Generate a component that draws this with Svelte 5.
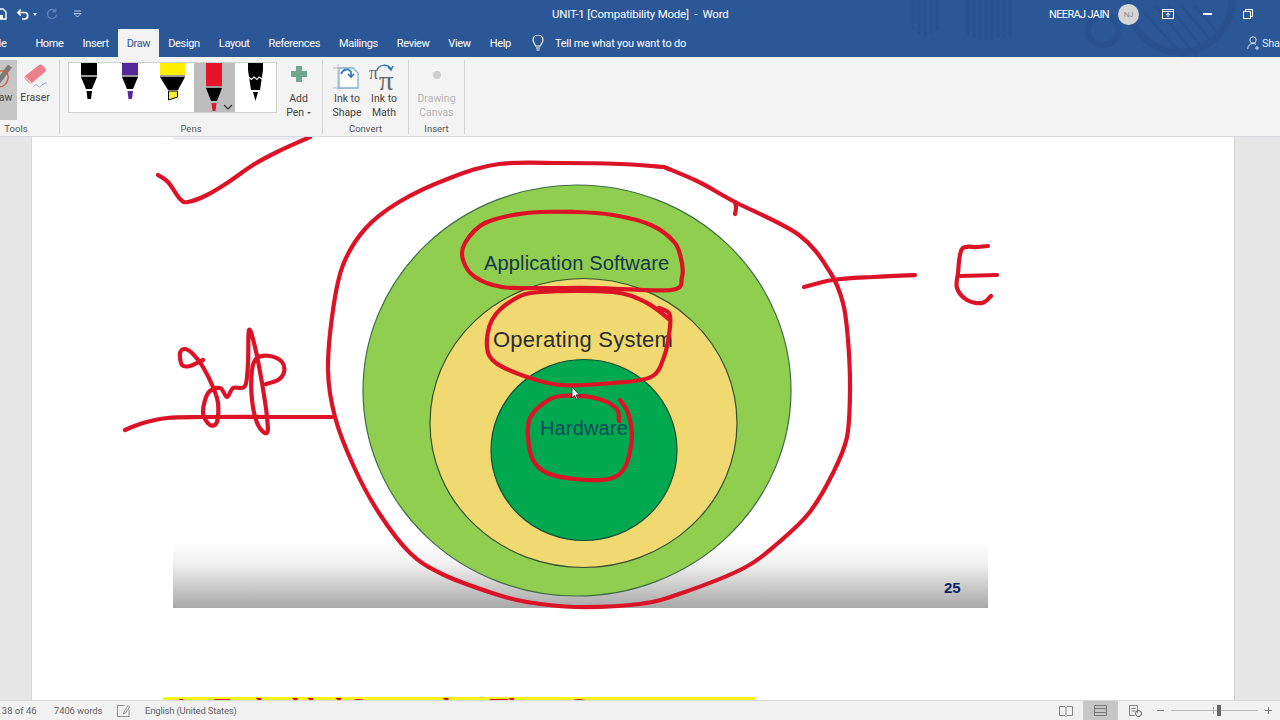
<script>
	const tabs = ['File', 'Home', 'Insert', 'Draw', 'Design', 'Layout', 'References', 'Mailings', 'Review', 'View', 'Help'];

	// page coordinates of the pen strokes on the slide
	const strokes = [
		[[158,175],[168,182],[180,199],[188,202],[207,195],[227,183],[253,165],[277,152],[310,137]],
		[[125,430],[143,423],[167,418],[203,417],[270,417],[332,417]],
		[[203,360],[190,366],[182,365],[180,353],[185,349],[193,354],[203,367],[213,387],[218,403],[217,422],[210,425],[203,413],[208,393],[220,388],[227,397],[233,388],[245,386],[248,363],[249,330],[255,347],[262,383],[267,417],[267,433],[258,425],[252,400],[252,370],[257,358],[270,356],[282,362],[284,372],[278,380],[266,384]],
		[[664,167],[620,164],[561,163],[499,164],[450,178],[399,202],[365,229],[343,265],[333,310],[328,370],[335,417],[354,467],[379,513],[410,553],[442,574],[492,593],[527,602],[575,607],[640,604],[682,593],[744,568],[778,543],[809,513],[833,473],[847,437],[850,390],[848,340],[843,303],[830,272],[799,235],[735,202],[699,182],[664,167]],
		[[735,202],[736,208],[735,214]],
		[[682,263],[675,243],[651,225],[613,215],[575,212],[527,213],[485,223],[465,243],[463,260],[475,277],[502,287],[544,288],[595,288],[671,290],[682,277],[682,263]],
		[[659,308],[669,313],[670,327],[664,357],[651,377],[613,383],[561,385],[527,377],[496,363],[487,347],[492,320],[513,300],[540,292],[613,292],[647,303],[670,320]],
		[[620,400],[628,413],[632,437],[625,467],[609,479],[575,479],[547,473],[533,460],[528,437],[530,418],[544,403],[561,396],[595,398],[616,408],[619,421]],
		[[804,287],[833,280],[873,277],[915,275]],
		[[988,246],[977,247],[962,249],[958,273],[957,288],[967,300],[982,303],[991,296]],
		[[960,276],[997,275]]
	];

	function smooth(pts) {
		let d = `M${pts[0][0]} ${pts[0][1]}`;
		for (let i = 0; i < pts.length - 1; i++) {
			const p0 = pts[i - 1] || pts[i];
			const p1 = pts[i];
			const p2 = pts[i + 1];
			const p3 = pts[i + 2] || p2;
			const c1x = p1[0] + (p2[0] - p0[0]) / 6;
			const c1y = p1[1] + (p2[1] - p0[1]) / 6;
			const c2x = p2[0] - (p3[0] - p1[0]) / 6;
			const c2y = p2[1] - (p3[1] - p1[1]) / 6;
			d += ` C${c1x.toFixed(1)} ${c1y.toFixed(1)} ${c2x.toFixed(1)} ${c2y.toFixed(1)} ${p2[0]} ${p2[1]}`;
		}
		return d;
	}
</script>

<div class="app">
	<div class="top">
		<svg class="pattern" viewBox="0 0 400 57" width="400" height="57" aria-hidden="true">
			<g fill="none" stroke="#27518f">
				<path d="M33 0V30M39 0V34M45 0V36M51 0V34M57 0V30" stroke-width="2.500" />
				<path d="M88 0V36M94 0V38M100 0V40M106 0V40M112 0V40M118 0V38M124 0V38M130 0V36" stroke-width="3" />
				<circle cx="223" cy="30" r="15" stroke-width="6" />
				<circle cx="300" cy="0" r="52" stroke-width="7" />
				<path d="M262 10l42 47M275 5l42 52M288 5l36 45M301 5l32 38M314 5l24 28" stroke-width="2.500" />
			</g>
		</svg>
		<header class="titlebar">
			<div class="qat">
				<svg width="8" height="12" viewBox="0 0 8 12"><path d="M-6 1h9l3 3v7H-6z" fill="none" stroke="#fff" stroke-width="1.4" /><path d="M-3 7h6v4h-6z" fill="#fff" /></svg>
				<svg class="undo" width="14" height="12" viewBox="0 0 14 12"><path d="M2 4.5h6.5a3 3 0 0 1 0 6.5H6M4.8 1.5 1.8 4.5l3 3" fill="none" stroke="#fff" stroke-width="1.6" /></svg>
				<i class="caret"></i>
				<svg class="redo" width="12" height="12" viewBox="0 0 12 12"><path d="M9.5 3.2A4.5 4.5 0 1 0 10.5 6.5M9.8 0.5v3h-3" fill="none" stroke="#5c80b4" stroke-width="1.4" /></svg>
				<svg class="more" width="9" height="8" viewBox="0 0 9 8"><path d="M1 1h7M1 3.5h7L4.5 7z" fill="none" stroke="#b7c8e2" stroke-width="1" /></svg>
			</div>
			<div class="doc-title">UNIT-1 [Compatibility Mode]&nbsp; -&nbsp; Word</div>
			<div class="account">
				<span class="user">NEERAJ JAIN</span>
				<span class="avatar">NJ</span>
				<svg class="win-ribbon" width="12" height="10" viewBox="0 0 12 10"><path d="M.5.5h11v9H.5z" fill="none" stroke="#fff" /><path d="M.5.5h11v2H.5zM6 8V4M4 6l2-2 2 2" fill="none" stroke="#fff" /></svg>
				<i class="win-min"></i>
				<svg class="win-max" width="10" height="10" viewBox="0 0 10 10"><path d="M.5 2.5h7v7h-7zM2.500 2.500v-2h7v7h-2" fill="none" stroke="#fff" /></svg>
			</div>
		</header>

		<nav class="tabs">
			{#each tabs as tab}
				<span class="tab" class:active={tab === 'Draw'}>{tab}</span>
			{/each}
			<span class="tell">
				<svg width="12" height="16" viewBox="0 0 12 16"><path d="M3.5 11C3 8.5 1 7.500 1 5a5 5 0 0 1 10 0c0 2.500-2 3.500-2.500 6zM4 13h4M4.500 15h3" fill="none" stroke="#fff" stroke-width="1.100" /></svg>
				Tell me what you want to do
			</span>
			<span class="share">
				<svg width="13" height="14" viewBox="0 0 13 14"><circle cx="6" cy="4" r="3.200" fill="none" stroke="#dbe5f3" /><path d="M.8 13c0-3.500 2.200-5.500 5.200-5.500 1.200 0 2.200.3 3 .9M10 10v4M8 12h4" fill="none" stroke="#dbe5f3" /></svg>
				Share
			</span>
		</nav>
	</div>

	<section class="ribbon">
		<div class="group tools">
			<div class="group-body">
				<div class="tool selected">
					<svg width="17" height="34" viewBox="0 0 17 34"><path d="M-2 22 10 6" stroke="#7a7a7a" stroke-width="5" /><path d="M-3 12c8-3 12 1 11 7-1 5-5 8-9 8" fill="none" stroke="#d9593d" stroke-width="1.300" /></svg>
					<span class="draw-label">aw</span>
				</div>
				<div class="tool eraser">
					<svg width="26" height="34" viewBox="0 0 26 34"><path d="M3 19 17 8c1-.8 2-.8 3 0l3.500 3.500c.8 1 .8 2 0 3L10 26c-1 .8-2 .8-3 0L3 22c-.8-1-.8-2 0-3z" fill="#ec7f8b" /><path d="M3 20l7 7" stroke="#fbd0d4" stroke-width="1.200" /><path d="M11 30c2-2 3-3 5-1s3 0 4-1 3-2 5-2" fill="none" stroke="#8db3d6" stroke-width="1" /></svg>
					<span>Eraser</span>
				</div>
			</div>
			<div class="group-label">Tools</div>
		</div>

		<div class="group pens">
			<div class="group-body">
				<div class="gallery">
					<svg width="207" height="49" viewBox="0 0 207 49">
						<rect x="125" width="41" height="49" fill="#bdbdbd" />
						<path d="M12 12h16v2H12zM53 12h16v2H53zM91 12h25v2H91zM137 23h16v2h-16z" fill="#9a9a9a" />
						<!-- black pen -->
						<path d="M12 0h16v12H12zM12 14h16l-5 12h-6z" fill="#000" />
						<path d="M17.500 28h5.500l-1 8h-3.500z" fill="#000" />
						<!-- purple pen -->
						<path d="M53 0h16v12H53z" fill="#54279a" />
						<path d="M53 14h16l-5 12h-6z" fill="#000" />
						<path d="M58.500 28h5.500l-1 8h-3.500z" fill="#54279a" />
						<!-- highlighter -->
						<path d="M91 0h25v12H91z" fill="#ffee00" />
						<path d="M91 14h25l-7 13h-10z" fill="#000" />
						<path d="M99.500 28h9v6l-9 3z" fill="#f6e92f" stroke="#000" />
						<!-- red pen -->
						<path d="M137 0h16v23h-16z" fill="#e6152a" />
						<path d="M137 25h16l-5 13h-6z" fill="#000" />
						<path d="M142.500 40h5l-1 8h-3z" fill="#d91a2a" />
						<path d="M155 42l4 4 4-4" fill="none" stroke="#333" stroke-width="1.200" />
						<!-- calligraphy pen -->
						<path d="M179 0h15v7l-3 20h-9l-3-20z" fill="#000" />
						<path d="M179.500 14l3 2.500 2.500-2.500 3 2.500 2-2.500 3 2" fill="none" stroke="#fff" stroke-width="1.100" />
						<path d="M184 29h5l-2.500 9z" fill="#000" />
					</svg>
				</div>
				<div class="tool add-pen">
					<svg width="18" height="18" viewBox="0 0 18 18"><path d="M6 1h6v5h5v6h-5v5H6v-5H1V6h5z" fill="#6fa88f" /></svg>
					<span>Add<br />Pen <i class="mini-caret"></i></span>
				</div>
			</div>
			<div class="group-label">Pens</div>
		</div>

		<div class="group convert">
			<div class="group-body">
				<div class="tool ink">
					<svg width="28" height="27" viewBox="0 0 28 27">
						<path d="M5 0v26M0 4h20M0 24h20" stroke="#b9bcc2" fill="none" />
						<path d="M6 4h14l5 5v15H6z" fill="#fff" stroke="#7fb1d9" stroke-width="1.300" />
						<path d="M8 10c2-5 8-6 10-2v4M15 10l3 3 3-3" fill="none" stroke="#2e75b6" stroke-width="1.700" />
					</svg>
					<span>Ink to<br />Shape</span>
				</div>
				<div class="tool ink math">
					<svg width="28" height="27" viewBox="0 0 28 27">
						<text x="-1" y="15" class="pi-small">π</text>
						<text x="9" y="26" class="pi-big">π</text>
						<path d="M7 6c2-6 11-6 14-1M18 3l3 3 2-4" fill="none" stroke="#2e75b6" stroke-width="1.500" />
					</svg>
					<span>Ink to<br />Math</span>
				</div>
			</div>
			<div class="group-label">Convert</div>
		</div>

		<div class="group insert">
			<div class="group-body">
				<div class="tool disabled">
					<svg width="28" height="28" viewBox="0 0 28 28"><circle cx="14" cy="15" r="4" fill="#cfcfcf" /></svg>
					<span>Drawing<br />Canvas</span>
				</div>
			</div>
			<div class="group-label">Insert</div>
		</div>
	</section>

	<main class="doc">
		<div class="page">
			<div class="prev-slide"></div>
			<div class="slide-foot"></div>
			<div class="next-slide"><span>An Embedded System has Three Components</span></div>
		</div>
		<svg class="canvas" viewBox="0 137 1280 563" width="1280" height="563">
			<ellipse cx="577" cy="390.500" rx="214" ry="205.500" fill="#8fce4e" stroke="#3f6b4a" stroke-width="1.200" />
			<ellipse cx="583.500" cy="423" rx="153.500" ry="144.500" fill="#f0d970" stroke="#35502f" stroke-width="1.200" />
			<ellipse cx="584" cy="450" rx="93" ry="90.500" fill="#00a94f" stroke="#124f34" stroke-width="1.200" />
			<text x="484" y="270" class="label app-label">Application Software</text>
			<text x="493" y="347" class="label os-label">Operating System</text>
			<text x="540" y="435" class="label hw-label">Hardware</text>
			<text x="944" y="593" class="slide-no">25</text>
			{#each strokes as s}
				<path d={smooth(s)} class="ink-stroke" />
			{/each}
			<path d="M572 387v11l2.500-2.500 2 4 1.500-.8-2-3.800h3.500z" fill="#fff" stroke="#222" stroke-width="0.800" />
		</svg>
	</main>

	<footer class="status">
		<span class="pages">Page 38 of 46</span>
		<span class="words">7406 words</span>
		<svg class="proof" width="13" height="12" viewBox="0 0 13 12"><path d="M.5.500h7M.5.500v11h7M6 11.500h6V5M11 .5 7 7l-.5 2 2-1 4-6z" fill="none" stroke="#777" stroke-width="0.800" /></svg>
		<span class="lang">English (United States)</span>
		<div class="views">
			<svg width="14" height="12" viewBox="0 0 14 12"><path d="M.5 1.500h5.500l1 1 1-1h5.500v9H8l-1 1-1-1H.5zM7 2.500v8" fill="none" stroke="#777" stroke-width="0.900" /></svg>
			<span class="view-print"><svg width="13" height="11" viewBox="0 0 13 11"><path d="M.5.500h12v10H.5zM.5 3.500h12M.5 7.500h12" fill="none" stroke="#6f6f6f" stroke-width="0.900" /></svg></span>
			<svg width="13" height="12" viewBox="0 0 13 12"><path d="M.5.500h8v8M.5.500v10h5M2.500 3.500h4M2.500 6h4" fill="none" stroke="#777" stroke-width="0.900" /><circle cx="9.500" cy="8.500" r="3" fill="none" stroke="#555" /></svg>
		</div>
		<div class="zoom">
			<i class="zoom-minus"></i>
			<div class="slider"><i class="slider-mid"></i><i class="slider-thumb"></i></div>
			<i class="zoom-plus"></i>
		</div>
	</footer>
</div>

<style>
	:global(body) {
		margin: 0;
		overflow: hidden;
		background: #fff;
	}

	.app {
		width: 1280px;
		height: 720px;
		display: flex;
		flex-direction: column;
		overflow: hidden;
		font-family: Roboto, 'Open Sans', sans-serif;
	}

	.top {
		position: relative;
		flex: none;
		background: #2b5797;
		color: #fff;
		font-size: 11px;
		letter-spacing: -0.350px;
	}

	.pattern {
		position: absolute;
		right: 0;
		top: 0;
	}

	/* title bar */
	.titlebar {
		position: relative;
		height: 28px;
		display: flex;
		align-items: center;
	}

	.qat {
		display: flex;
		align-items: center;
		width: 280px;
	}

	.undo {
		margin-left: 8px;
	}

	.caret {
		width: 0;
		height: 0;
		margin-left: 3px;
		border: 2.500px solid transparent;
		border-top: 3px solid #dce6f5;
		border-bottom: 0;
	}

	.redo {
		margin-left: 9px;
	}

	.more {
		margin-left: 15px;
	}

	.doc-title {
		margin-left: 272px;
		width: 300px;
		flex: none;
		white-space: nowrap;
		font-size: 11.500px;
		letter-spacing: -0.200px;
	}

	.account {
		margin-left: 197px;
		display: flex;
		align-items: center;
		white-space: nowrap;
	}

	.user {
		letter-spacing: -0.650px;
	}

	.avatar {
		width: 21px;
		height: 21px;
		margin-left: 9px;
		border-radius: 50%;
		background: #d5d5d5;
		color: #8a8a8a;
		font-size: 8px;
		display: flex;
		align-items: center;
		justify-content: center;
	}

	.win-ribbon {
		margin-left: 23px;
	}

	.win-min {
		width: 9px;
		height: 1.500px;
		margin-left: 29px;
		background: #fff;
	}

	.win-max {
		margin-left: 31px;
	}

	/* tab row */
	.tabs {
		position: relative;
		height: 29px;
		display: flex;
		align-items: flex-end;
	}

	.tab {
		height: 28px;
		line-height: 29px;
		padding: 0 9.500px;
		flex: none;
	}

	.tab:first-child {
		margin-left: -19px;
		margin-right: 10px;
	}

	.tab.active {
		background: #f3f3f3;
		color: #2b5797;
		padding: 0 8.500px;
	}

	.tell {
		height: 28px;
		margin-left: 11.500px;
		display: flex;
		align-items: center;
		gap: 11px;
		letter-spacing: -0.200px;
	}

	.share {
		position: absolute;
		left: 1247px;
		top: 1px;
		height: 28px;
		display: flex;
		align-items: center;
		gap: 2px;
		color: #dbe5f3;
		white-space: nowrap;
	}

	/* ribbon */
	.ribbon {
		height: 79px;
		flex: none;
		display: flex;
		background: #f3f3f3;
		border-bottom: 1px solid #d6d9df;
		color: #444;
		font-size: 10.500px;
	}

	.group {
		flex: none;
		display: flex;
		flex-direction: column;
		position: relative;
		box-sizing: border-box;
		border-right: 1px solid #d4d4d4;
		margin: 3px 0 2px;
	}

	.group-body {
		display: flex;
		flex: none;
		height: 60px;
	}

	.group-label {
		margin: auto 0 -2px;
		height: 14px;
		line-height: 14px;
		text-align: center;
		font-size: 9.500px;
		color: #555;
	}

	.tools {
		width: 60px;
	}

	.tools .group-label {
		width: 32px;
	}

	.pens {
		width: 263px;
	}

	.convert {
		width: 86px;
	}

	.insert {
		width: 56px;
	}

	.tool {
		display: flex;
		flex-direction: column;
		align-items: center;
		text-align: center;
		line-height: 14px;
	}

	.tool svg {
		flex: none;
	}

	.tool.selected {
		width: 17px;
		background: #c6c6c6;
		overflow: hidden;
	}

	.tool.selected svg {
		margin-bottom: -3px;
	}

	.draw-label {
		margin-left: -6px;
	}

	.eraser {
		margin-left: 2px;
		width: 32px;
	}

	.eraser svg {
		margin-top: -3px;
	}

	.gallery {
		width: 207px;
		height: 49px;
		margin: 2px 0 0 8px;
		background: #fff;
		border: 1px solid #cfcfcf;
	}

	.gallery svg {
		display: block;
	}

	.add-pen {
		width: 41px;
		margin-left: 1px;
	}

	.add-pen svg {
		margin: 5px 0 9px;
	}

	.mini-caret {
		display: inline-block;
		margin-bottom: 2px;
		border: 2px solid transparent;
		border-top: 2.500px solid #555;
		border-bottom: 0;
	}

	.ink {
		width: 30px;
		margin-left: 9px;
		white-space: nowrap;
	}

	.ink + .ink {
		margin-left: 7px;
	}

	.ink svg {
		margin: 4px 0 1px;
	}

	.math svg {
		overflow: visible;
	}

	.pi-small {
		font: 18px 'Liberation Serif', serif;
		fill: #666;
	}

	.pi-big {
		font: 28px 'Liberation Serif', serif;
		fill: #666;
	}

	.disabled {
		width: 56px;
		color: #b5b5b5;
	}

	.disabled svg {
		margin-bottom: 4px;
	}

	/* document */
	.doc {
		position: relative;
		flex: 1;
		min-height: 0;
		background: #e6e6e6;
		padding: 0 45px 0 31px;
		overflow: hidden;
	}

	.page {
		position: relative;
		height: 100%;
		background: #fff;
		border-left: 1px solid #d8d8d8;
		border-right: 1px solid #d0d0d0;
		overflow: hidden;
	}

	.prev-slide {
		position: absolute;
		left: 141px;
		top: 0;
		width: 130px;
		height: 3px;
		background: #e9ecf3;
	}

	.slide-foot {
		position: absolute;
		left: 141px;
		top: 403px;
		width: 815px;
		height: 68px;
		background: linear-gradient(#fff, #f0f0f0 35%, #a8a8a8);
	}

	.next-slide {
		position: absolute;
		left: 131px;
		top: 560px;
		width: 592px;
		height: 60px;
		background: #f7f31e;
	}

	.next-slide span {
		display: block;
		margin: 2px 0 0 8px;
		font: bold 28px/18px 'Liberation Serif', serif;
		color: #d8101c;
		white-space: nowrap;
	}

	.canvas {
		position: absolute;
		left: 0;
		top: 0;
	}

	.label {
		font-family: 'Liberation Sans', sans-serif;
		font-size: 20px;
		letter-spacing: 0.150px;
	}

	.app-label {
		fill: #14364a;
	}

	.os-label {
		fill: #2c2c2c;
		font-size: 22px;
		letter-spacing: 0.250px;
	}

	.hw-label {
		fill: #0b4a5c;
	}

	.slide-no {
		font: bold 15px 'Liberation Sans', sans-serif;
		fill: #0c1f6a;
	}

	.ink-stroke {
		fill: none;
		stroke: #dc1226;
		stroke-width: 4.200;
		stroke-linecap: round;
		stroke-linejoin: round;
	}

	/* status bar */
	.status {
		position: relative;
		height: 20px;
		flex: none;
		display: flex;
		align-items: center;
		background: #f1f1f1;
		border-top: 1px solid #d8d8d8;
		box-sizing: border-box;
		color: #666;
		font-size: 9.500px;
	}

	.pages {
		margin-left: -22px;
		width: 76px;
		flex: none;
		white-space: nowrap;
	}

	.words {
		width: 63px;
		flex: none;
		letter-spacing: -0.150px;
	}

	.proof {
		flex: none;
	}

	.lang {
		margin-left: 15px;
		letter-spacing: -0.200px;
	}

	.views {
		position: absolute;
		left: 1059px;
		top: 0;
		height: 19px;
		display: flex;
		align-items: center;
	}

	.view-print {
		width: 35px;
		height: 100%;
		margin: 0 11px 0 10px;
		display: flex;
		align-items: center;
		justify-content: center;
		background: #c6c6c6;
	}

	.zoom {
		position: absolute;
		left: 1157px;
		top: 0;
		height: 19px;
		display: flex;
		align-items: center;
	}

	.zoom-minus {
		width: 7px;
		height: 1px;
		background: #777;
	}

	.slider {
		position: relative;
		width: 87px;
		height: 1px;
		margin: 0 7px;
		background: #bbb;
	}

	.slider-mid {
		position: absolute;
		left: 42px;
		top: -3px;
		width: 1px;
		height: 7px;
		background: #aaa;
	}

	.slider-thumb {
		position: absolute;
		left: 46px;
		top: -5px;
		width: 4px;
		height: 11px;
		background: #666;
	}

	.zoom-plus {
		position: relative;
		width: 7px;
		height: 1px;
		background: #777;
	}

	.zoom-plus::after {
		content: '';
		position: absolute;
		left: 3px;
		top: -3px;
		width: 1px;
		height: 7px;
		background: #777;
	}
</style>
